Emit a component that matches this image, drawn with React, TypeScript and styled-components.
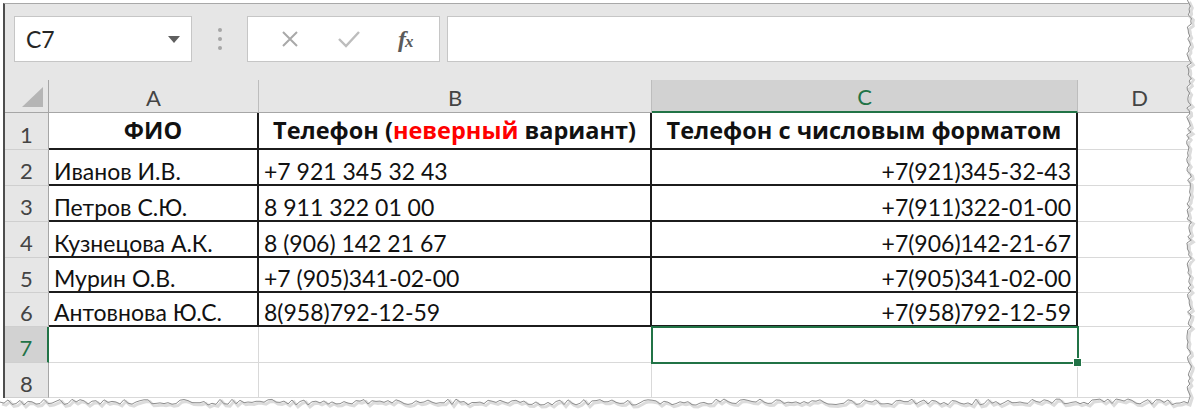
import React from "react";
import styled, { createGlobalStyle, css } from "styled-components";

const GREEN = "#217346";
const CELL_FONT = `"Lato", "Liberation Sans", sans-serif`;
const BOLD_FONT = `"Open Sans", "Lato", sans-serif`;

const GlobalStyle = createGlobalStyle`
  html, body {
    margin: 0;
    padding: 0;
    background: #ffffff;
  }
`;

const Frame = styled.div`
  position: relative;
  width: 1200px;
  height: 415px;
  padding-top: 3px;
  box-sizing: border-box;
  overflow: hidden;
  background: #ffffff;
`;

const Sheet = styled.div`
  margin-left: 3px;
  width: 1197px;
  border-left: 2px solid #4d4d4d;
  border-top: 1px solid #a8a8a8;
  background: #e6e6e6;
  font-family: ${CELL_FONT};
`;

const Toolbar = styled.div`
  display: flex;
  align-items: stretch;
  height: 76px;
  padding: 12px 0 18px 9px;
  box-sizing: border-box;
`;

const NameBox = styled.div`
  width: 178px;
  display: flex;
  align-items: center;
  justify-content: space-between;
  padding: 0 10px 0 11px;
  box-sizing: border-box;
  background: #ffffff;
  border: 1px solid #c6c6c6;
  font-size: 23px;
  color: #262626;
`;

const DropArrow = styled.span`
  width: 0;
  height: 0;
  border-left: 6px solid transparent;
  border-right: 6px solid transparent;
  border-top: 7px solid #5f5f5f;
  margin-right: 1px;
`;

const Grip = styled.div`
  width: 55px;
  display: flex;
  flex-direction: column;
  align-items: center;
  justify-content: center;
  gap: 5px;
  span {
    width: 4px;
    height: 4px;
    border-radius: 50%;
    background: #a6a6a6;
  }
`;

const FormulaButtons = styled.div`
  width: 193px;
  display: flex;
  align-items: center;
  justify-content: space-around;
  padding: 0 8px 0 14px;
  box-sizing: border-box;
  background: #ffffff;
  border: 1px solid #c6c6c6;
`;

const FxLabel = styled.span`
  font-family: "Liberation Serif", serif;
  font-style: italic;
  font-weight: bold;
  font-size: 24px;
  color: #5a5a5a;
  letter-spacing: -1px;
  small {
    font-size: 17px;
  }
`;

const FormulaInput = styled.div`
  flex: 1;
  margin-left: 7px;
  background: #ffffff;
  border: 1px solid #c6c6c6;
  border-right: none;
`;

const Grid = styled.div`
  display: grid;
  grid-template-columns: 44px 210px 393px 426px 1fr;
  grid-template-rows: 33px 37px 36px 36px 36px 35px 34px 36px 35px;
  background: #ffffff;
`;

const Corner = styled.div`
  position: relative;
  background: #e6e6e6;
  border-right: 1px solid #a6a6a6;
  border-bottom: 1px solid #a6a6a6;
  &::after {
    content: "";
    position: absolute;
    right: 5px;
    bottom: 5px;
    width: 0;
    height: 0;
    border-left: 21px solid transparent;
    border-bottom: 20px solid #b5b5b5;
  }
`;

const ColHead = styled.div<{ $active?: boolean }>`
  display: flex;
  align-items: center;
  justify-content: center;
  padding-top: 2px;
  box-sizing: border-box;
  font-size: 22px;
  color: #444444;
  background: #e6e6e6;
  border-right: 1px solid #bdbdbd;
  border-bottom: 1px solid #a6a6a6;
  ${(p) =>
    p.$active &&
    css`
      background: #d2d2d2;
      color: ${GREEN};
      border-bottom: 2px solid ${GREEN};
    `}
`;

const RowHead = styled.div<{ $active?: boolean }>`
  display: flex;
  align-items: center;
  justify-content: center;
  padding-top: 6px;
  box-sizing: border-box;
  font-size: 22px;
  color: #444444;
  background: #e6e6e6;
  border-right: 1px solid #a6a6a6;
  border-bottom: 1px solid #cfcfcf;
  ${(p) =>
    p.$active &&
    css`
      background: #d2d2d2;
      color: ${GREEN};
      border-right: 2px solid ${GREEN};
    `}
`;

const Cell = styled.div<{
  $table?: boolean;
  $bold?: boolean;
  $align?: "left" | "center" | "right";
  $selected?: boolean;
}>`
  position: relative;
  display: flex;
  align-items: flex-end;
  justify-content: ${(p) =>
    p.$align === "right" ? "flex-end" : p.$align === "center" ? "center" : "flex-start"};
  padding: ${(p) => (p.$bold ? "0 5px 4px 5px" : "0 5px 0 5px")};
  box-sizing: border-box;
  font-family: ${(p) => (p.$bold ? BOLD_FONT : CELL_FONT)};
  font-size: ${(p) => (p.$bold ? "23.5px" : "23px")};
  font-weight: ${(p) => (p.$bold ? 700 : 400)};
  line-height: ${(p) => (p.$bold ? 1.2 : 1.1)};
  color: #111111;
  white-space: nowrap;
  border-right: ${(p) => (p.$table ? "2px solid #1c1c1c" : "1px solid #d9d9d9")};
  border-bottom: ${(p) => (p.$table ? "2px solid #1c1c1c" : "1px solid #d9d9d9")};
  ${(p) =>
    p.$selected &&
    css`
      outline: 2px solid ${GREEN};
      outline-offset: -1px;
      z-index: 1;
      &::after {
        content: "";
        position: absolute;
        right: -5px;
        bottom: -5px;
        width: 7px;
        height: 7px;
        background: ${GREEN};
        border: 1px solid #ffffff;
      }
    `}
`;

const Red = styled.span`
  color: #ff0000;
`;

const TornEdge = styled.svg`
  position: absolute;
  left: 0;
  top: 0;
  pointer-events: none;
`;

const rows: [string, string, string][] = [
  ["Иванов И.В.", "+7 921 345 32 43", "+7(921)345-32-43"],
  ["Петров С.Ю.", "8 911 322 01 00", "+7(911)322-01-00"],
  ["Кузнецова А.К.", "8 (906) 142 21 67", "+7(906)142-21-67"],
  ["Мурин О.В.", "+7 (905)341-02-00", "+7(905)341-02-00"],
  ["Антовнова Ю.С.", "8(958)792-12-59", "+7(958)792-12-59"],
];

const noise = (i: number) => {
  const v = Math.sin(i * 12.9898 + 78.233) * 43758.5453;
  return v - Math.floor(v);
};

const buildEdge = () => {
  const pts: [number, number][] = [];
  for (let y = 0; y <= 398; y += 3) {
    pts.push([1189 + (noise(y) - 0.5) * 5, y]);
  }
  for (let x = 1188; x >= 0; x -= 4) {
    pts.push([x, 402 + (noise(x + 977) - 0.5) * 6]);
  }
  return pts;
};

const Torn = () => {
  const pts = buildEdge();
  const line = pts.map(([x, y]) => `${x.toFixed(1)},${y.toFixed(1)}`).join(" ");
  const fill = `M1200,0 L${line.replace(/ /g, " L")} L0,415 L1200,415 Z`;
  return (
    <TornEdge width="1200" height="415" viewBox="0 0 1200 415">
      <path d={fill} fill="#ffffff" />
      <polyline points={line} fill="none" stroke="#dcdcdc" strokeWidth="3" transform="translate(2 2)" />
      <polyline points={line} fill="none" stroke="#8f8f8f" strokeWidth="1" />
    </TornEdge>
  );
};

export default function App() {
  return (
    <Frame>
      <GlobalStyle />
      <Sheet>
        <Toolbar>
          <NameBox>
            C7
            <DropArrow />
          </NameBox>
          <Grip>
            <span />
            <span />
            <span />
          </Grip>
          <FormulaButtons>
            <svg width="20" height="20" viewBox="0 0 20 20">
              <path d="M3 3 L17 17 M17 3 L3 17" stroke="#a9a9a9" strokeWidth="2" fill="none" />
            </svg>
            <svg width="24" height="20" viewBox="0 0 24 20">
              <path d="M2 10 L9 17 L22 3" stroke="#bdbdbd" strokeWidth="2.4" fill="none" />
            </svg>
            <FxLabel>
              f<small>x</small>
            </FxLabel>
          </FormulaButtons>
          <FormulaInput />
        </Toolbar>
        <Grid>
          <Corner />
          <ColHead>A</ColHead>
          <ColHead>B</ColHead>
          <ColHead $active>C</ColHead>
          <ColHead>D</ColHead>

          <RowHead>1</RowHead>
          <Cell $table $bold $align="center">ФИО</Cell>
          <Cell $table $bold $align="center">
            Телефон (<Red>неверный</Red>&nbsp;вариант)
          </Cell>
          <Cell $table $bold $align="center">Телефон с числовым форматом</Cell>
          <Cell />

          {rows.map(([name, raw, fmt], i) => (
            <React.Fragment key={name}>
              <RowHead>{i + 2}</RowHead>
              <Cell $table>{name}</Cell>
              <Cell $table>{raw}</Cell>
              <Cell $table $align="right">{fmt}</Cell>
              <Cell />
            </React.Fragment>
          ))}

          <RowHead $active>7</RowHead>
          <Cell />
          <Cell />
          <Cell $selected />
          <Cell />

          <RowHead>8</RowHead>
          <Cell />
          <Cell />
          <Cell />
          <Cell />
        </Grid>
      </Sheet>
      <Torn />
    </Frame>
  );
}
